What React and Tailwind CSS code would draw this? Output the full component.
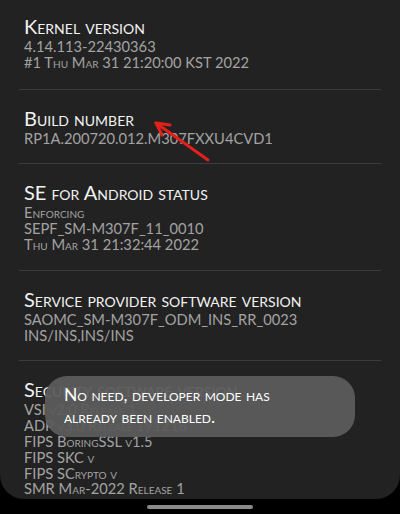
import React from 'react';

const items = [
  { title: 'Kernel version', lines: ['4.14.113-22430363', '#1 Thu Mar 31 21:20:00 KST 2022'] },
  { title: 'Build number', lines: ['RP1A.200720.012.M307FXXU4CVD1'] },
  { title: 'SE for Android status', lines: ['Enforcing', 'SEPF_SM-M307F_11_0010', 'Thu Mar 31 21:32:44 2022'] },
  { title: 'Service provider software version', lines: ['SAOMC_SM-M307F_ODM_INS_RR_0023', 'INS/INS,INS/INS'] },
  {
    title: 'Security software version',
    lines: ['VSI v2.0 Release 1', 'ADP v3.0 Release 191218', 'FIPS BoringSSL v1.5', 'FIPS SKC v', 'FIPS SCrypto v', 'SMR Mar-2022 Release 1'],
  },
];

const font = { fontFamily: '"Lato", "Open Sans", sans-serif' };

const App = () => {
  return (
    <div className="relative w-[400px] h-[514px] bg-black overflow-hidden [font-variant-caps:small-caps]" style={font}>
      {/* Card */}
      <div className="h-[499px] bg-[#222222] rounded-b-[24px] overflow-hidden pt-[15px]">
        {items.map((item, i) => (
          <div key={item.title}>
            {i > 0 && <div className="mx-[19px] h-px bg-[#3c3c3c]" />}
            <div className={`px-[24px] ${i === 0 ? 'pb-[18px]' : 'pt-[17px] pb-[17px]'}`}>
              <div className="text-[20px] leading-[22px] text-[#f2f2f2]">{item.title}</div>
              <div className="mt-[2px]">
                {item.lines.map((line) => (
                  <div key={line} className="text-[14.7px] leading-[15.8px] text-[#a3a3a3]">{line}</div>
                ))}
              </div>
            </div>
          </div>
        ))}
      </div>

      {/* Home indicator */}
      <div className="flex justify-center pt-[6px]">
        <div className="w-[106px] h-[4px] rounded-full bg-[#8a8a8a]" />
      </div>

      {/* Red arrow annotation */}
      <svg className="absolute left-0 top-0" width="400" height="200" viewBox="0 0 400 200">
        <g stroke="#e3201b" strokeWidth="3" strokeLinecap="round" fill="none">
          <line x1="208" y1="160" x2="156" y2="123" />
          <path d="M156 123 L170 125 M156 123 L162 135" />
        </g>
      </svg>

      {/* Toast */}
      <div className="absolute left-[45px] top-[376px] w-[310px] h-[61px] rounded-[22px] bg-[#5c5c5c]/95 px-[19px] py-[8px]">
        <div className="text-[17.5px] leading-[22px] text-white">No need, developer mode has</div>
        <div className="text-[17.5px] leading-[22px] text-white">already been enabled.</div>
      </div>
    </div>
  );
};

export default App;
